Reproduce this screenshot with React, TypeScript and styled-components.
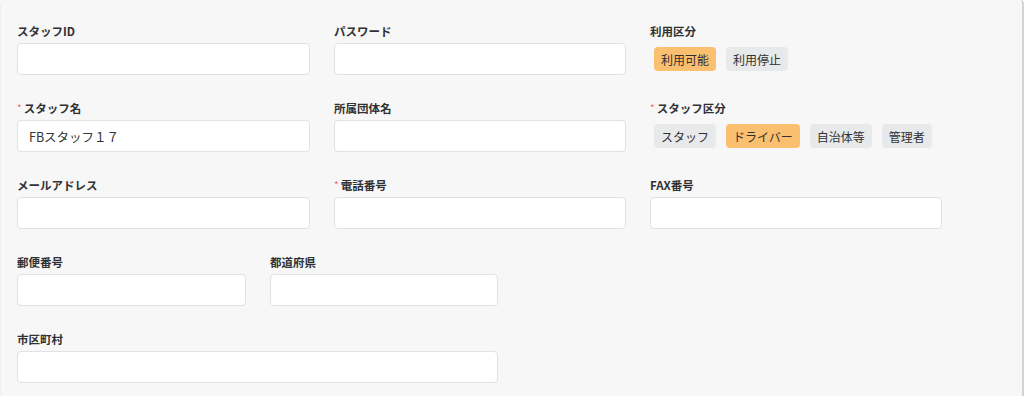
import React from "react";
import styled, { createGlobalStyle } from "styled-components";

const GlobalStyle = createGlobalStyle`
  html, body {
    margin: 0;
    padding: 0;
    background: #ffffff;
    font-family: "Noto Sans CJK JP", "Noto Sans", sans-serif;
  }
`;

const Card = styled.div`
  box-sizing: border-box;
  width: 1024px;
  min-height: 396px;
  background-color: #f7f7f7;
  border-radius: 4px;
  border-left: 1px solid #efefef;
  border-right: 2px solid #d4d4d4;
  padding: 24px 17px 20px 16px;
`;

const Form = styled.div`
  display: flex;
  flex-direction: column;
  gap: 26px;
`;

const Row = styled.div<{ $columns: string }>`
  display: grid;
  grid-template-columns: ${(props) => props.$columns};
  column-gap: 24px;
`;

const Field = styled.div`
  display: flex;
  flex-direction: column;
`;

const Label = styled.div`
  font-size: 11.5px;
  line-height: 14px;
  height: 14px;
  font-weight: 700;
  color: #303133;
  margin-bottom: 5px;
  white-space: nowrap;
  display: flex;
  align-items: center;
`;

const Required = styled.span`
  color: #f56c6c;
  font-size: 10px;
  font-weight: 400;
  margin-right: 2px;
  margin-top: -1px;
`;

const Input = styled.div`
  box-sizing: border-box;
  height: 32px;
  background: #ffffff;
  border: 1px solid #e2e2e2;
  border-radius: 4px;
  padding: 0 11px;
  display: flex;
  align-items: center;
  font-size: 12.5px;
  color: #333;
`;

const ChipGroup = styled.div`
  display: flex;
  gap: 10px;
  padding-top: 4px;
  padding-left: 4px;
`;

const Chip = styled.div<{ $active?: boolean }>`
  height: 24px;
  padding: 0 7px;
  border-radius: 4px;
  display: flex;
  align-items: center;
  font-size: 12px;
  color: #303133;
  background-color: ${(props) => (props.$active ? "#fbc06f" : "#e8e9ea")};
  white-space: nowrap;
`;

type TextFieldProps = { label: string; required?: boolean; value?: string };

function TextField({ label, required, value }: TextFieldProps) {
  return (
    <Field>
      <Label>
        {required && <Required>*</Required>}
        {label}
      </Label>
      <Input>{value}</Input>
    </Field>
  );
}

type ChipFieldProps = {
  label: string;
  required?: boolean;
  options: string[];
  selected: string;
};

function ChipField({ label, required, options, selected }: ChipFieldProps) {
  return (
    <Field>
      <Label>
        {required && <Required>*</Required>}
        {label}
      </Label>
      <ChipGroup>
        {options.map((o) => (
          <Chip key={o} $active={o === selected}>
            {o}
          </Chip>
        ))}
      </ChipGroup>
    </Field>
  );
}

export default function App() {
  return (
    <>
      <GlobalStyle />
      <Card>
        <Form>
          <Row $columns="293px 292px 292px">
            <TextField label="スタッフID" />
            <TextField label="パスワード" />
            <ChipField
              label="利用区分"
              options={["利用可能", "利用停止"]}
              selected="利用可能"
            />
          </Row>
          <Row $columns="293px 292px 292px">
            <TextField label="スタッフ名" required value="FBスタッフ１７" />
            <TextField label="所属団体名" />
            <ChipField
              label="スタッフ区分"
              required
              options={["スタッフ", "ドライバー", "自治体等", "管理者"]}
              selected="ドライバー"
            />
          </Row>
          <Row $columns="293px 292px 292px">
            <TextField label="メールアドレス" />
            <TextField label="電話番号" required />
            <TextField label="FAX番号" />
          </Row>
          <Row $columns="229px 228px">
            <TextField label="郵便番号" />
            <TextField label="都道府県" />
          </Row>
          <Row $columns="481px">
            <TextField label="市区町村" />
          </Row>
        </Form>
      </Card>
    </>
  );
}
